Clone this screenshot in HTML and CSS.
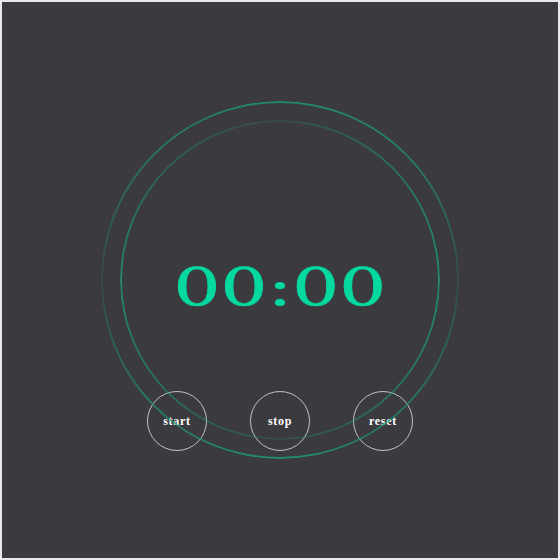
FILE: index.html
```html
<!DOCTYPE html>
<html lang="en">
<head>
<meta charset="utf-8">
<title>Timer</title>
<link rel="stylesheet" href="styles.css">
</head>
<body>
<main class="stage">
  <div class="ring ring-outer"></div>
  <div class="ring ring-inner"></div>
  <div class="content">
    <div class="time">00:00</div>
    <div class="controls">
      <button class="btn" type="button">start</button>
      <button class="btn" type="button">stop</button>
      <button class="btn" type="button">reset</button>
    </div>
  </div>
</main>
</body>
</html>
```
FILE: styles.css
```css
html {
  background: #e8e8ea;
}
body {
  margin: 2px;
  width: 556px;
  height: 556px;
  background: #3b3a3f;
}
.stage {
  display: grid;
  width: 556px;
  height: 556px;
  place-items: center;
}
.stage > * {
  grid-area: 1 / 1;
}
.ring {
  box-sizing: border-box;
  border: 2px solid transparent;
  border-radius: 50%;
  -webkit-mask: linear-gradient(#000 0 0) padding-box, linear-gradient(#000 0 0);
  -webkit-mask-composite: xor;
  mask: linear-gradient(#000 0 0) padding-box exclude, linear-gradient(#000 0 0);
}
.ring-outer {
  width: 358px;
  height: 358px;
  background: conic-gradient(
    rgba(30, 150, 112, 0.85) 0deg,
    rgba(30, 150, 112, 0.75) 45deg,
    rgba(30, 150, 112, 0.22) 90deg,
    rgba(30, 150, 112, 0.65) 135deg,
    rgba(30, 150, 112, 0.9) 180deg,
    rgba(30, 150, 112, 0.7) 225deg,
    rgba(30, 150, 112, 0.18) 270deg,
    rgba(30, 150, 112, 0.65) 315deg,
    rgba(30, 150, 112, 0.85) 360deg
  ) border-box;
}
.ring-inner {
  width: 320px;
  height: 320px;
  background: conic-gradient(
    rgba(30, 150, 112, 0.2) 0deg,
    rgba(30, 150, 112, 0.6) 45deg,
    rgba(30, 150, 112, 0.85) 90deg,
    rgba(30, 150, 112, 0.6) 135deg,
    rgba(30, 150, 112, 0.22) 180deg,
    rgba(30, 150, 112, 0.55) 225deg,
    rgba(30, 150, 112, 0.85) 270deg,
    rgba(30, 150, 112, 0.4) 315deg,
    rgba(30, 150, 112, 0.2) 360deg
  ) border-box;
}
.content {
  align-self: start;
  justify-self: center;
  padding-top: 259px;
  display: flex;
  flex-direction: column;
  align-items: center;
}
.time {
  height: 52px;
  font-family: "DejaVu Serif", serif;
  font-size: 52px;
  line-height: 1;
  color: #05d9a0;
  -webkit-text-stroke: 0.6px #05d9a0;
  transform: scaleX(1.42);
}
.controls {
  margin-top: 78px;
  display: flex;
  gap: 43px;
}
.btn {
  box-sizing: border-box;
  width: 60px;
  height: 60px;
  padding: 0;
  border: 1px solid #c2c2c4;
  border-radius: 50%;
  background: transparent;
  color: #ffffff;
  font-family: "Liberation Serif", serif;
  font-weight: bold;
  font-size: 12px;
  letter-spacing: 0.7px;
  display: flex;
  align-items: center;
  justify-content: center;
}
```
